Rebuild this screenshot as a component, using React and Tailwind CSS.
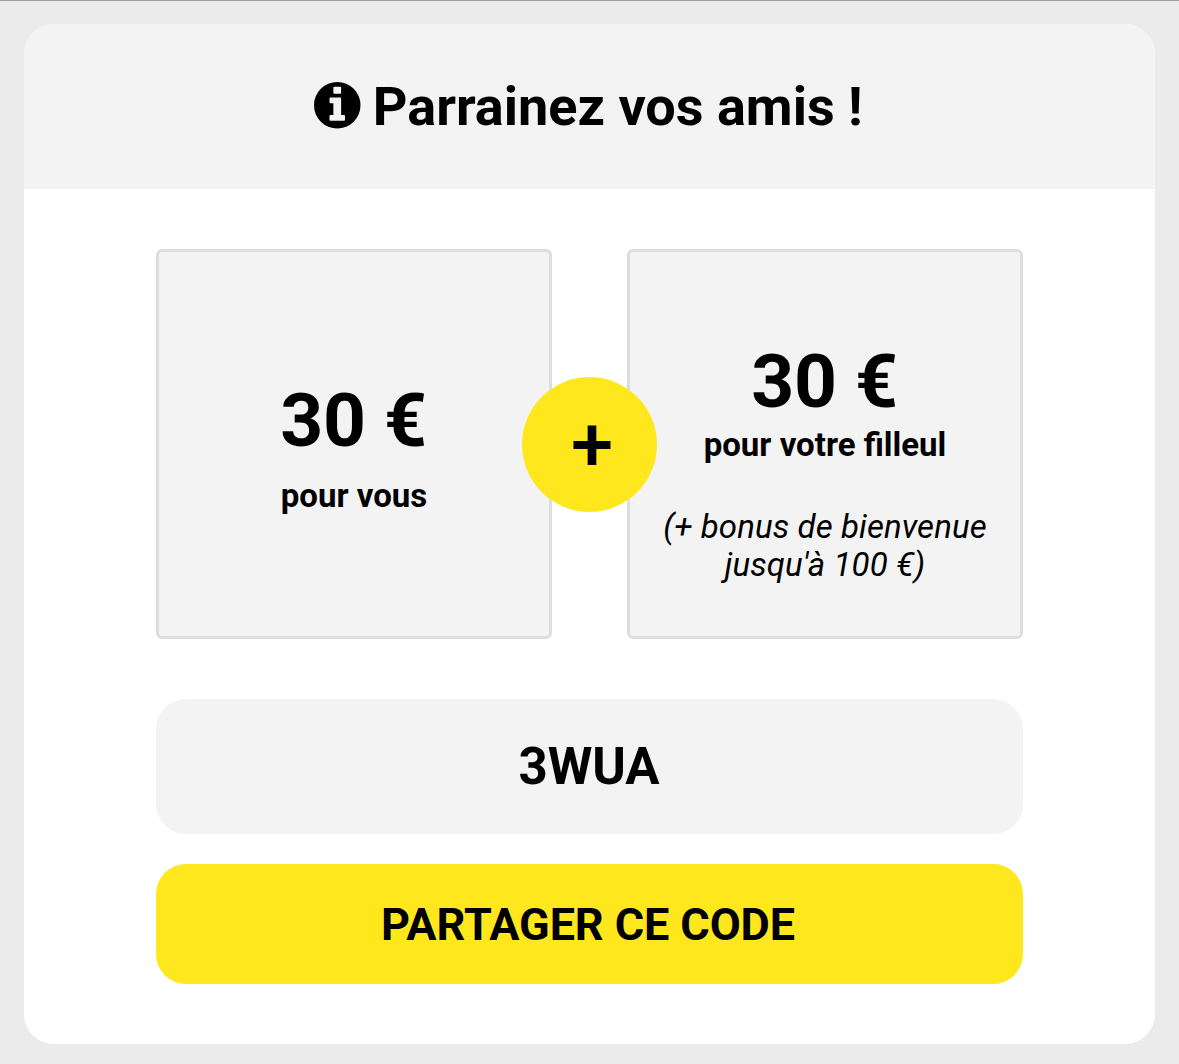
const REWARD_BOX =
  'flex h-[390px] w-[396px] flex-col items-center justify-center rounded-md border-[3px] border-[#dddddd] bg-[#f3f3f3] text-center';

function InfoIcon() {
  return (
    <svg viewBox="0 0 1536 1536" className="mb-[2px] h-[46.5px] w-[46.5px]" fill="currentColor" aria-hidden="true">
      <path
        fillRule="evenodd"
        d="M768 0a768 768 0 1 0 0 1536a768 768 0 0 0 0-1536zM672 160h192q32 0 32 32v160q0 32-32 32h-192q-32 0-32-32v-160q0-32 32-32zM544 512h320q32 0 32 32v544h96q32 0 32 32v128q0 32-32 32h-448q-32 0-32-32v-128q0-32 32-32h96v-384h-96q-32 0-32-32v-128q0-32 32-32z"
      />
    </svg>
  );
}

function PlusBadge() {
  return (
    <div className="absolute left-[366px] top-[128px] flex h-[135px] w-[135px] items-center justify-center rounded-full bg-[#fee81d]">
      <span className="pl-[5px] text-[76px] font-medium leading-none">+</span>
    </div>
  );
}

export default function App() {
  return (
    <div className="h-[1064px] w-[1179px] border-t border-[#a0a0a0] bg-[#ebebeb] px-6 pt-[23px] font-['Roboto',sans-serif] text-black">
      <main className="h-[1020px] overflow-hidden rounded-[30px] bg-white">
        <header className="flex h-[165px] items-center justify-center gap-[12px] bg-[#f3f3f3] pr-[2px]">
          <InfoIcon />
          <h1 className="text-[54px] font-bold leading-none">Parrainez vos amis !</h1>
        </header>

        <div className="px-[132px] pt-[60px]">
          <section className="relative flex justify-between">
            <div className={REWARD_BOX}>
              <p className="pr-[1px] pt-[2px] text-[75px] font-bold leading-[90px] tracking-[-0.3px]">30 €</p>
              <p className="mt-[12px] text-[33px] font-bold leading-[38px]">pour vous</p>
            </div>
            <div className={REWARD_BOX}>
              <p className="pr-[1px] pt-[32px] text-[75px] font-bold leading-[90px] tracking-[-0.3px]">30 €</p>
              <p className="text-[33px] font-bold leading-[38px]">pour votre filleul</p>
              <p className="mt-[44px] text-[33px] italic leading-[38px] tracking-[0.1px]">
                (+ bonus de bienvenue
                <br />
                jusqu'à 100 €)
              </p>
            </div>
            <PlusBadge />
          </section>

          <div className="mt-[60px] flex h-[135px] items-center justify-center rounded-[30px] bg-[#f3f3f3] pr-[1px] pt-[2px] text-[51px] font-bold">
            3WUA
          </div>
          <button
            type="button"
            className="mt-[30px] flex h-[120px] w-full items-center justify-center rounded-[30px] bg-[#fee81d] pr-[3px] pt-[2px] text-[45px] font-bold tracking-[-0.1px]"
          >
            PARTAGER CE CODE
          </button>
        </div>
      </main>
    </div>
  );
}
